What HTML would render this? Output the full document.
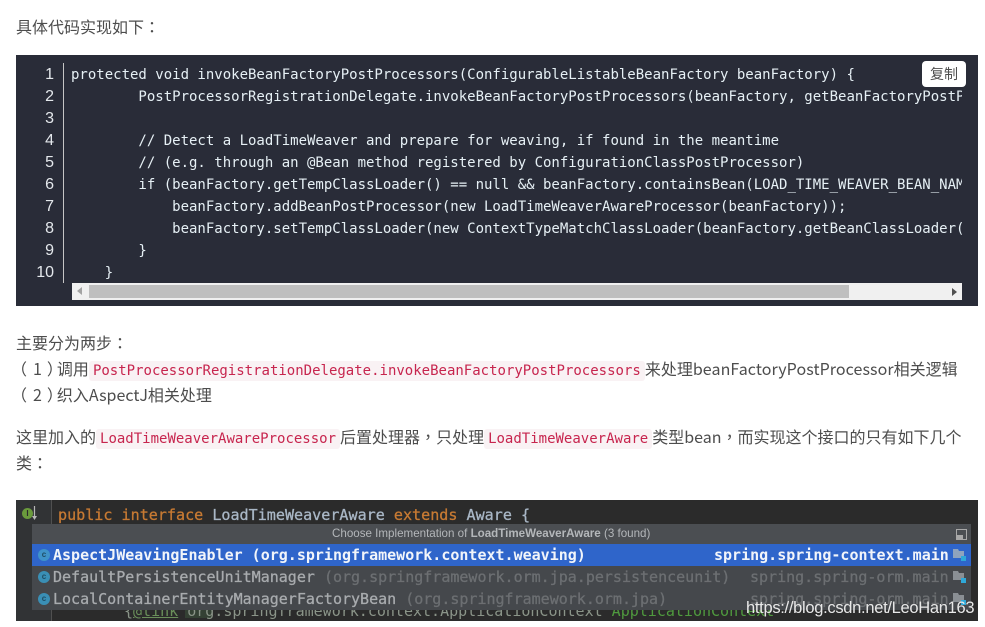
<!DOCTYPE html>
<html lang="zh">
<head>
<meta charset="utf-8">
<style>
html,body{margin:0;padding:0;background:#fff;}
body{width:985px;height:627px;position:relative;overflow:hidden;font-family:"Liberation Sans","Noto Sans CJK SC",sans-serif;}
.p{position:absolute;left:16px;font-family:"Noto Sans CJK SC","Liberation Sans",sans-serif;font-size:16px;line-height:26px;height:26px;color:#4d4d4d;white-space:pre;}
.q{font-family:"Noto Sans CJK TC",sans-serif;}
.po{position:relative;left:-5px;}
.pd{position:relative;left:1px;}
.pc{position:relative;left:6px;}
.l{letter-spacing:.08px;}
code{font-family:"DejaVu Sans Mono","Liberation Mono",monospace;font-size:14px;color:#c7254e;background:#f9f2f4;border-radius:3px;padding:2px 4px;}
#block{position:absolute;left:16px;top:55px;width:962px;height:251px;background:#292c38;}
.n{position:absolute;left:0;width:38px;text-align:right;font-size:16px;line-height:22px;color:#e4e8ec;}
#gutter{position:absolute;left:47px;top:8px;width:1px;height:220px;background:#c5c5c5;}
#code{position:absolute;left:55px;top:8px;width:891px;height:220px;overflow:hidden;}
#code pre{margin:1px 0 0;font-family:"DejaVu Sans Mono","Liberation Mono",monospace;font-size:14px;line-height:22px;color:#e6f0f5;}
#copy{position:absolute;left:906px;top:6px;width:44px;height:26px;background:#fff;border-radius:4px;color:#4d4d4d;font-size:14px;line-height:26px;text-align:center;}
#track{position:absolute;left:56px;top:228px;width:890px;height:17px;background:#f0f0f0;}
#thumb{position:absolute;left:17px;top:2px;width:760px;height:13px;background:#bfbfbf;}
#img{position:absolute;left:16px;top:500px;width:962px;height:121px;background:#2b2b2b;overflow:hidden;}
.m{position:absolute;font-family:"DejaVu Sans Mono","Liberation Mono",monospace;white-space:pre;filter:blur(.35px);}
.row{font-size:15px;line-height:22px;-webkit-text-stroke:.3px;}
.ic{position:absolute;left:22px;width:12px;height:12px;border-radius:50%;background:#3a8fb5;color:#1f4d63;font:bold 8px/12px "Liberation Sans",sans-serif;text-align:center;}
.fo{position:absolute;left:921px;width:13px;height:12px;}
#wm{position:absolute;left:746px;top:598px;font-size:16.5px;line-height:20px;color:#e8e8e8;white-space:pre;letter-spacing:-.3px;}
</style>
</head>
<body>
<div class="p" style="top:13px">具体代码实现如下<span class="q" lang="zh-TW">：</span></div>

<div id="block">
  <div class="n" style="top:9px">1</div>
  <div class="n" style="top:31px">2</div>
  <div class="n" style="top:53px">3</div>
  <div class="n" style="top:75px">4</div>
  <div class="n" style="top:97px">5</div>
  <div class="n" style="top:119px">6</div>
  <div class="n" style="top:141px">7</div>
  <div class="n" style="top:163px">8</div>
  <div class="n" style="top:185px">9</div>
  <div class="n" style="top:207px">10</div>
  <div id="gutter"></div>
  <div id="code"><pre>protected void invokeBeanFactoryPostProcessors(ConfigurableListableBeanFactory beanFactory) {
        PostProcessorRegistrationDelegate.invokeBeanFactoryPostProcessors(beanFactory, getBeanFactoryPostProcessors());

        // Detect a LoadTimeWeaver and prepare for weaving, if found in the meantime
        // (e.g. through an @Bean method registered by ConfigurationClassPostProcessor)
        if (beanFactory.getTempClassLoader() == null &amp;&amp; beanFactory.containsBean(LOAD_TIME_WEAVER_BEAN_NAME)) {
            beanFactory.addBeanPostProcessor(new LoadTimeWeaverAwareProcessor(beanFactory));
            beanFactory.setTempClassLoader(new ContextTypeMatchClassLoader(beanFactory.getBeanClassLoader()));
        }
    }</pre></div>
  <div id="copy">复制</div>
  <div id="track">
    <div id="thumb"></div>
    <svg style="position:absolute;left:5px;top:4px" width="6" height="9"><path d="M5 0V8L0 4Z" fill="#a3a3a3"/></svg>
    <svg style="position:absolute;left:880px;top:5px" width="6" height="8"><path d="M0 0V8L5 4Z" fill="#505050"/></svg>
  </div>
</div>

<div class="p" style="top:329px">主要分为两步<span class="q" lang="zh-TW">：</span></div>
<div class="p" style="top:355px"><span class="q po" lang="zh-TW">（</span><span class="pd">1</span><span class="q pc" lang="zh-TW">）</span>调用<code>PostProcessorRegistrationDelegate.invokeBeanFactoryPostProcessors</code>来处理<span class="l">beanFactoryPostProcessor</span>相关逻辑</div>
<div class="p" style="top:381px"><span class="q po" lang="zh-TW">（</span><span class="pd">2</span><span class="q pc" lang="zh-TW">）</span>织入AspectJ相关处理</div>
<div class="p" style="top:423px">这里加入的<code>LoadTimeWeaverAwareProcessor</code>后置处理器<span class="q" lang="zh-TW">，</span>只处理<code>LoadTimeWeaverAware</code>类型bean<span class="q" lang="zh-TW">，</span>而实现这个接口的只有如下几个</div>
<div class="p" style="top:449px">类<span class="q" lang="zh-TW">：</span></div>

<div id="img">
  <div style="position:absolute;left:0;top:0;width:35px;height:121px;background:#313335"></div>
  <div style="position:absolute;left:35px;top:0;width:1px;height:121px;background:#505050"></div>
  <div style="position:absolute;left:6px;top:8px;width:11px;height:11px;border-radius:50%;background:#6a9a3c;color:#2b2b2b;font:bold 8px/11px 'Liberation Sans',sans-serif;text-align:center">I</div>
  <svg style="position:absolute;left:15px;top:6px" width="8" height="15"><path d="M3.500 0V11" stroke="#b8b8b8" stroke-width="1.2"/><path d="M1 10L3.500 14L6 10Z" fill="#b8b8b8"/></svg>
  <div class="m row" style="left:42px;top:4px;font-size:15.08px"><span style="color:#c77a33">public interface </span><span style="color:#a9b7c6">LoadTimeWeaverAware </span><span style="color:#c77a33">extends </span><span style="color:#a9b7c6">Aware {</span></div>
  <div style="position:absolute;left:169px;top:110px;width:27px;height:8px;background:#344134"></div>
  <div class="m" style="left:108px;top:101px;font-size:15px;line-height:20px;color:#8a9488">{<span style="color:#6a8f5a;text-decoration:underline">@link</span> org.springframework.context.ApplicationContext <span style="color:#4f9a3e">ApplicationContext</span></div>

  <div style="position:absolute;left:16px;top:24px;width:939px;height:86px;background:#45484c">
    <div style="position:absolute;left:0;top:0;width:939px;height:20px;background:#4b4e52"></div>
    <div class="m" style="left:300px;top:3px;width:400px;font-family:'Liberation Sans',sans-serif;font-size:11.6px;line-height:14px;color:#b4b7ba;filter:blur(.25px)">Choose Implementation of <b>LoadTimeWeaverAware</b> (3 found)</div>
    <svg style="position:absolute;left:924px;top:5px" width="11" height="11"><path d="M.5.5H10.500V10.500H.5Z" fill="none" stroke="#a8a8a8"/><path d="M1 6H7V10H1Z" fill="#a8a8a8"/></svg>
    <div style="position:absolute;left:0;top:20px;width:939px;height:22px;background:#2f65ca"></div>

    <div class="ic" style="left:6px;top:25px;background:#3f93c9">c</div>
    <div class="m row" style="left:21px;top:20px;color:#f2f5fa;font-weight:bold;-webkit-text-stroke:0">AspectJWeavingEnabler (org.springframework.context.weaving)</div>
    <div class="m row" style="left:682px;top:20px;color:#f2f5fa;font-weight:bold;-webkit-text-stroke:0">spring.spring-context.main</div>
    <svg class="fo" style="top:25px" viewBox="0 0 13 12"><path d="M0 0H5L6 2H11V9H0Z" fill="#8fa3bd"/><path d="M8 7H13V12H8Z" fill="#2fa8d8"/></svg>

    <div class="ic" style="left:6px;top:47px">c</div>
    <div class="m row" style="left:21px;top:42px;color:#a8abae">DefaultPersistenceUnitManager <span style="color:#6c6f72">(org.springframework.orm.jpa.persistenceunit)</span></div>
    <div class="m row" style="left:718px;top:42px;color:#6c6f72">spring.spring-orm.main</div>
    <svg class="fo" style="top:47px" viewBox="0 0 13 12"><path d="M0 0H5L6 2H11V9H0Z" fill="#8a8f94"/><path d="M8 7H13V12H8Z" fill="#2fa8d8"/></svg>

    <div class="ic" style="left:6px;top:69px">c</div>
    <div class="m row" style="left:21px;top:64px;color:#a8abae">LocalContainerEntityManagerFactoryBean <span style="color:#6c6f72">(org.springframework.orm.jpa)</span></div>
    <div class="m row" style="left:718px;top:64px;color:#6c6f72">spring.spring-orm.main</div>
    <svg class="fo" style="top:69px" viewBox="0 0 13 12"><path d="M0 0H5L6 2H11V9H0Z" fill="#8a8f94"/><path d="M8 7H13V12H8Z" fill="#2fa8d8"/></svg>
  </div>
</div>
<div id="wm">https://blog.csdn.net/LeoHan163</div>
</body>
</html>
